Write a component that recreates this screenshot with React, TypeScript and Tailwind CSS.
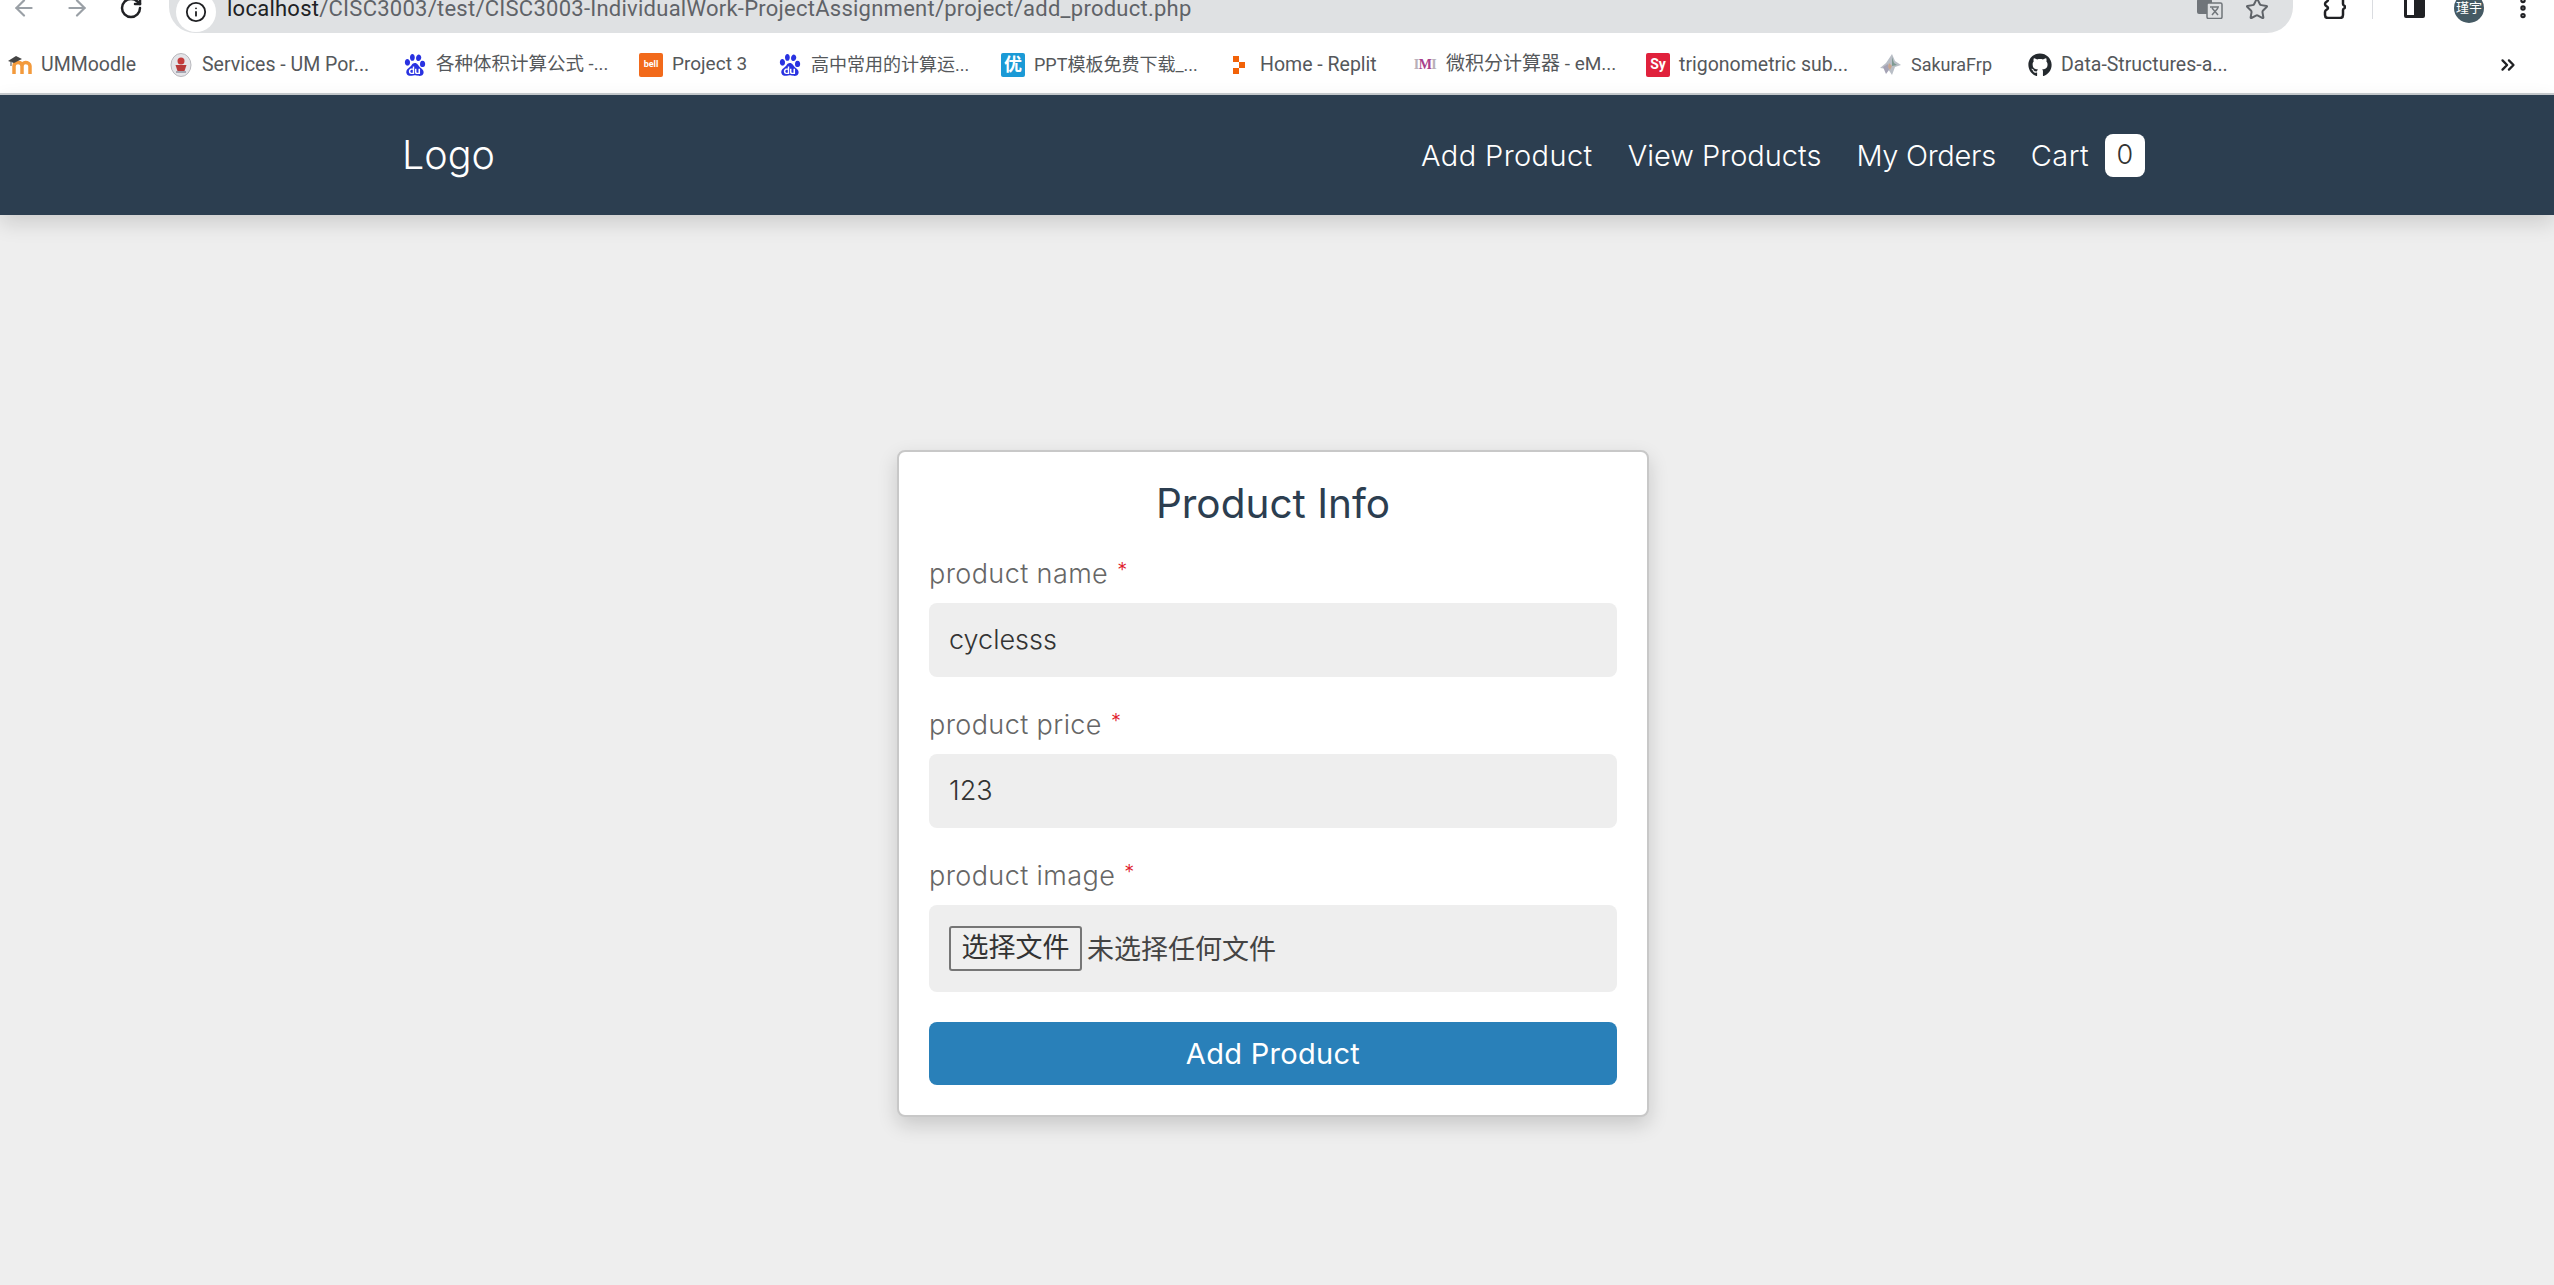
import React from 'react';
import { ArrowLeft, ArrowRight, ChevronsRight, Info, MoreVertical, RotateCw, Star } from 'lucide-react';
import { FaGithub } from 'react-icons/fa';
import { SiBaidu } from 'react-icons/si';

const uiFont = "font-['Inter','Noto_Sans_CJK_SC',sans-serif]";

function Moodle() {
  return (
    <svg width="24" height="18" viewBox="0 0 24 18">
      <path d="M6 18V10c0-2 1.500-3.500 4-3.500S14 8 14 10v8M14 10c0-2 1.500-3.500 3.500-3.500S22 8 22 10v8" fill="none" stroke="#f39a3c" strokeWidth="3.500" />
      <path d="M0 5l8-5 6 3-8 4z" fill="#444" />
      <path d="M3 5v5" stroke="#666" strokeWidth="1.200" />
    </svg>
  );
}

function Services() {
  return (
    <svg width="22" height="24" viewBox="0 0 22 24">
      <ellipse cx="11" cy="12" rx="10" ry="11.500" fill="#e4e4e8" stroke="#b8b8bd" strokeWidth="1" />
      <circle cx="11" cy="8" r="3.500" fill="#c43b3b" />
      <path d="M5.500 12h11l-2 6H7.500z" fill="#b83a3a" />
      <path d="M6 19h10" stroke="#a5a5b0" strokeWidth="2" />
    </svg>
  );
}

function Letter({ bg, text, className }: { bg: string; text: string; className: string }) {
  return (
    <span className={`flex h-6 w-6 items-center justify-center rounded-[2px] ${bg} ${className} font-bold text-white`}>
      {text}
    </span>
  );
}

function Replit() {
  return (
    <svg width="20" height="22" viewBox="0 0 20 22" fill="#f26207">
      <rect x="4" y="2" width="6" height="6" />
      <rect x="10" y="8" width="6" height="6" />
      <rect x="4" y="14" width="6" height="6" />
    </svg>
  );
}

function Sakura() {
  return (
    <svg width="24" height="24" viewBox="0 0 24 24">
      <path d="M14 1l3 7 6 4-6 2-3 8-4-6-8-1 6-5z" fill="#b9bec6" />
      <path d="M14 4l2 6 3 2-5 1z" fill="#7e9a92" />
      <path d="M5 14l5-3 1 6-3 4z" fill="#a5a3b5" />
      <path d="M11 10l3 3-2 4-2-3z" fill="#c9a58d" />
    </svg>
  );
}

function EmIcon() {
  return (
    <span className="font-['Liberation_Serif',serif] text-[14px] font-bold tracking-[-0.5px] text-[#b8b0b8]">
      I<span className="text-[#a8408c]">M</span>I
    </span>
  );
}

const bookmarks = [
  { label: 'UMMoodle', width: 'w-[161px]', size: 'text-[19.5px]', icon: <Moodle /> },
  { label: 'Services - UM Por...', width: 'w-[234px]', size: 'text-[19.5px]', icon: <Services /> },
  { label: '各种体积计算公式 -...', width: 'w-[236px]', size: 'text-[18.5px]', icon: <SiBaidu size={22} color="#2932e1" /> },
  { label: 'Project 3', width: 'w-[139px]', size: 'text-[19px]', icon: <Letter bg="bg-[#f26a1b]" text="bell" className="text-[9px]" /> },
  { label: '高中常用的计算运...', width: 'w-[223px]', size: 'text-[18px]', icon: <SiBaidu size={22} color="#2932e1" /> },
  { label: 'PPT模板免费下载_...', width: 'w-[226px]', size: 'text-[18px]', icon: <Letter bg="bg-[#1b9ad6]" text="优" className="text-[18px]" /> },
  { label: 'Home - Replit', width: 'w-[186px]', size: 'text-[19.5px]', icon: <Replit /> },
  { label: '微积分计算器 - eM...', width: 'w-[233px]', size: 'text-[19px]', icon: <EmIcon /> },
  { label: 'trigonometric sub...', width: 'w-[232px]', size: 'text-[19.5px]', icon: <Letter bg="bg-[#e0213c]" text="Sy" className="text-[14px]" /> },
  { label: 'SakuraFrp', width: 'w-[150px]', size: 'text-[18px]', icon: <Sakura /> },
  { label: 'Data-Structures-a...', width: 'w-[220px]', size: 'text-[19.5px]', icon: <FaGithub size={24} color="#24292e" /> },
];

function BrowserChrome() {
  return (
    <div className="h-[95px] overflow-hidden border-b-2 border-[#c9cdd0] bg-white font-['Roboto','Noto_Sans_CJK_SC',sans-serif]">
      <div className="flex h-[33px] items-start">
        <div className="-mt-[5px] flex items-center gap-[27px] pl-[11px] text-[#9aa0a6]">
          <ArrowLeft size={26} strokeWidth={2} />
          <ArrowRight size={26} strokeWidth={2} />
          <RotateCw size={24} strokeWidth={2.5} className="ml-[2px] text-[#202124]" />
        </div>
        <div className="ml-[26px] flex h-[33px] w-[2124px] items-start rounded-b-[26px] bg-[#dfe1e3] pl-[7px] pr-[24px]">
          <span className="-mt-[8px] flex h-[40px] w-[40px] items-center justify-center rounded-full bg-white">
            <Info size={22} strokeWidth={2} className="text-[#202124]" />
          </span>
          <span className="ml-[11px] text-[22px] leading-[18px] tracking-[0.25px] text-[#5f6368]">
            <span className="text-[#202124]">localhost</span>/CISC3003/test/CISC3003-IndividualWork-ProjectAssignment/project/add_product.php
          </span>
          <div className="-mt-[3px] ml-auto flex items-center gap-[22px]">
            <svg width="26" height="20" viewBox="0 0 26 20">
              <rect x="0" y="0" width="15" height="15" rx="2" fill="#70757a" />
              <rect x="10" y="4" width="15" height="15.500" rx="1.500" fill="#dfe1e3" stroke="#70757a" strokeWidth="1.500" />
              <path d="M13 8h9M15 16l6-7M15 9l6 7" stroke="#70757a" strokeWidth="1.500" fill="none" />
            </svg>
            <Star size={24} strokeWidth={2} className="text-[#5f6368]" />
          </div>
        </div>
        <div className="flex items-start">
          <svg width="24" height="30" viewBox="0 0 24 30" fill="none" stroke="#202124" strokeWidth="2.500" className="-mt-[11px] ml-[29px]">
            <path d="M6 2v9c0 2-3 1-3 4s3 2 3 4-3 1-3 4v3q0 3 3 3h12q3 0 3-3v-5c0-2 2-1 2-3s-2-1-2-3V2" />
          </svg>
          <span className="ml-[26px] h-[19px] w-px bg-[#dadce0]" />
          <span className="-mt-[4px] ml-[31px] flex h-[22px] w-[21px] justify-end rounded-[2px] border-[3px] border-[#202124]">
            <span className="h-full w-[8px] bg-[#202124]" />
          </span>
          <span className="-mt-[7px] ml-[29px] flex h-[30px] w-[30px] items-center justify-center rounded-full bg-[#455a64] text-[13px] text-white">
            瑾宇
          </span>
          <MoreVertical size={26} strokeWidth={3} className="-mt-[5px] ml-[26px] text-[#202124]" />
        </div>
      </div>
      <div className="flex h-[60px] items-center pl-[8px] pt-[3px] text-[#55585b]">
        {bookmarks.map((item) => (
          <div key={item.label} className={`flex shrink-0 items-center gap-[9px] whitespace-nowrap ${item.width} ${item.size}`}>
            <span className="flex h-[26px] w-[24px] items-center justify-center">{item.icon}</span>
            <span>{item.label}</span>
          </div>
        ))}
        <ChevronsRight size={22} strokeWidth={2.5} className="ml-[249px] text-[#202124]" />
      </div>
    </div>
  );
}

function FieldLabel({ label }: { label: string }) {
  return (
    <div className="flex h-[55px] items-center pb-[3px] text-[27px] font-light tracking-[0.4px] text-[#666]">
      {label}
      <span className="-mt-[8px] ml-[9px] text-[20px] text-[#e0202c]">*</span>
    </div>
  );
}

function Field({ label, value }: { label: string; value: string }) {
  return (
    <div className="mb-[22px]">
      <FieldLabel label={label} />
      <div className="flex h-[74px] items-center rounded-lg bg-[#eeeeee] px-[20px] text-[27px] font-light text-[#333]">{value}</div>
    </div>
  );
}

export default function App() {
  return (
    <div className={`min-h-[1285px] bg-[#eeeeee] ${uiFont}`}>
      <BrowserChrome />
      <header className="h-[120px] bg-[#2c3e50] shadow-[0_8px_20px_rgba(0,0,0,0.14)]">
        <div className="flex h-full w-[2145px] items-center pl-[402px] pt-[1px]">
          <span className="text-[39.5px] font-light text-white">Logo</span>
          <nav className="ml-auto flex items-center gap-[35px] text-[29px] font-light text-white">
            <span className="tracking-[0.4px]">Add Product</span>
            <span>View Products</span>
            <span className="tracking-[-0.3px]">My Orders</span>
            <span className="flex items-center gap-[16px] tracking-[0.4px]">
              Cart
              <span className="flex h-[43px] w-[40px] items-center justify-center rounded-lg bg-white text-[27px] text-[#333]">0</span>
            </span>
          </nav>
        </div>
      </header>
      <main className="pl-[897px] pt-[235px]">
        <form className="h-[667px] w-[752px] rounded-lg border-2 border-[#c8c8c8] bg-white px-[30px] pt-[27px] shadow-[0_8px_20px_rgba(0,0,0,0.16)]">
          <h3 className="mb-[19px] h-[50px] text-center text-[40.5px] font-normal leading-[50px] text-[#2c3e50]">Product Info</h3>
          <Field label="product name" value="cyclesss" />
          <Field label="product price" value="123" />
          <div className="mb-[30px]">
            <FieldLabel label="product image" />
            <div className="flex h-[87px] items-center rounded-lg bg-[#eeeeee] px-[20px] text-[27px] text-[#333]">
              <span className="flex h-[45px] w-[133px] items-center justify-center rounded-[3px] border-2 border-[#767676] bg-[#efefef] text-[#333]">选择文件</span>
              <span className="ml-[5px] pt-[3px] text-[#444]">未选择任何文件</span>
            </div>
          </div>
          <button type="button" className="h-[63px] w-full rounded-lg bg-[#2980b9] text-[29px] font-normal tracking-[0.3px] text-white">Add Product</button>
        </form>
      </main>
    </div>
  );
}
